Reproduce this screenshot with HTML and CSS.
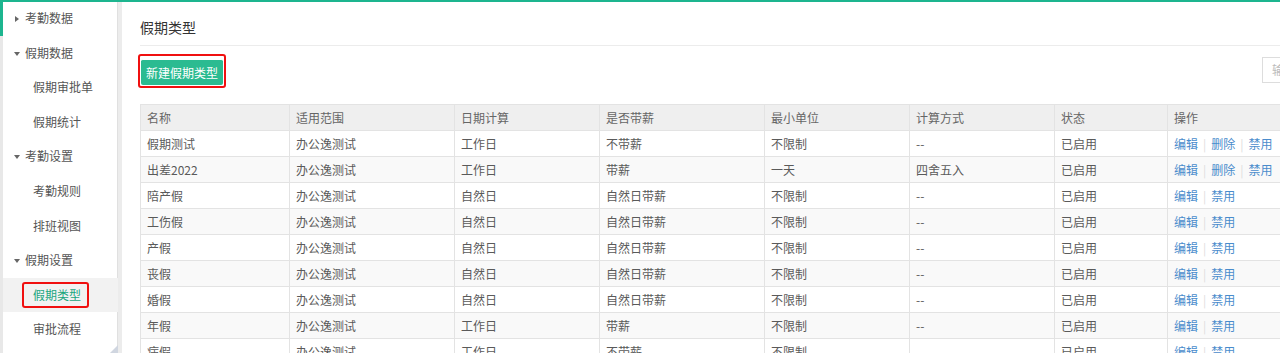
FILE: index.html
```html
<!DOCTYPE html>
<html lang="zh-CN">
<head>
<meta charset="utf-8">
<title>假期类型</title>
<link rel="stylesheet" href="styles.css">
</head>
<body>
<div class="app">
  <aside class="sidebar">
    <ul class="menu">
      <li class="item top first"><span class="caret right"></span>考勤数据</li>
      <li class="item top"><span class="caret down"></span>假期数据</li>
      <li class="item sub">假期审批单</li>
      <li class="item sub">假期统计</li>
      <li class="item top"><span class="caret down"></span>考勤设置</li>
      <li class="item sub">考勤规则</li>
      <li class="item sub">排班视图</li>
      <li class="item top"><span class="caret down"></span>假期设置</li>
      <li class="item sub active"><span class="mark">假期类型</span></li>
      <li class="item sub">审批流程</li>
    </ul>
    <span class="grip"></span>
  </aside>
  <main class="main">
    <h1 class="title">假期类型</h1>
    <div class="toolbar">
      <span class="btn-mark"><button class="btn">新建假期类型</button></span>
      <span class="search">输入</span>
    </div>
    <table class="grid">
      <colgroup>
        <col style="width:149px"><col style="width:165px"><col style="width:145px"><col style="width:165px"><col style="width:145px"><col style="width:145px"><col style="width:113px"><col style="width:160px">
      </colgroup>
      <thead>
        <tr><th>名称</th><th>适用范围</th><th>日期计算</th><th>是否带薪</th><th>最小单位</th><th>计算方式</th><th>状态</th><th>操作</th></tr>
      </thead>
      <tbody>
        <tr><td>假期测试</td><td>办公逸测试</td><td>工作日</td><td>不带薪</td><td>不限制</td><td>--</td><td>已启用</td><td class="ops"><a>编辑</a><i>|</i><a>删除</a><i>|</i><a>禁用</a></td></tr>
        <tr><td>出差2022</td><td>办公逸测试</td><td>工作日</td><td>带薪</td><td>一天</td><td>四舍五入</td><td>已启用</td><td class="ops"><a>编辑</a><i>|</i><a>删除</a><i>|</i><a>禁用</a></td></tr>
        <tr><td>陪产假</td><td>办公逸测试</td><td>自然日</td><td>自然日带薪</td><td>不限制</td><td>--</td><td>已启用</td><td class="ops"><a>编辑</a><i>|</i><a>禁用</a></td></tr>
        <tr><td>工伤假</td><td>办公逸测试</td><td>自然日</td><td>自然日带薪</td><td>不限制</td><td>--</td><td>已启用</td><td class="ops"><a>编辑</a><i>|</i><a>禁用</a></td></tr>
        <tr><td>产假</td><td>办公逸测试</td><td>自然日</td><td>自然日带薪</td><td>不限制</td><td>--</td><td>已启用</td><td class="ops"><a>编辑</a><i>|</i><a>禁用</a></td></tr>
        <tr><td>丧假</td><td>办公逸测试</td><td>自然日</td><td>自然日带薪</td><td>不限制</td><td>--</td><td>已启用</td><td class="ops"><a>编辑</a><i>|</i><a>禁用</a></td></tr>
        <tr><td>婚假</td><td>办公逸测试</td><td>自然日</td><td>自然日带薪</td><td>不限制</td><td>--</td><td>已启用</td><td class="ops"><a>编辑</a><i>|</i><a>禁用</a></td></tr>
        <tr><td>年假</td><td>办公逸测试</td><td>工作日</td><td>带薪</td><td>不限制</td><td>--</td><td>已启用</td><td class="ops"><a>编辑</a><i>|</i><a>禁用</a></td></tr>
        <tr><td>病假</td><td>办公逸测试</td><td>工作日</td><td>不带薪</td><td>不限制</td><td>--</td><td>已启用</td><td class="ops"><a>编辑</a><i>|</i><a>禁用</a></td></tr>
      </tbody>
    </table>
  </main>
</div>
</body>
</html>
```

FILE: styles.css
```css
* { box-sizing: border-box; }
html, body { margin: 0; padding: 0; height: 100%; overflow: hidden; background: #fff; }
body {
  font-family: "Noto Sans CJK SC", "Noto Sans", "Liberation Sans", sans-serif;
  font-size: 12px;
  color: #555;
  border-top: 2px solid #1db58f;
}
.app { display: flex; height: 100%; }

.sidebar {
  position: relative;
  width: 122px;
  flex: none;
  border-left: 3px solid #e8e8e8;
  border-right: 4px solid #ececec;
  background: #fff;
  box-shadow: inset -1px 0 0 #e0e0e0;
}
.menu { list-style: none; margin: -1px 0 0 0; padding: 0; }
.item {
  height: 34.6px;
  line-height: 34.6px;
  white-space: nowrap;
  color: #555;
}
.item.first { box-shadow: -3px 0 0 #1db58f; }
.item.top { padding-left: 11px; }
.item.sub { padding-left: 30px; }
.item.active { background: #f2f2f2; padding-left: 19px; color: #1aa67f; }
.mark {
  display: inline-block;
  line-height: 20px;
  padding: 1px 6px 1px 9px;
  border: 2px solid #f01010;
  border-radius: 3px;
}
.caret {
  display: inline-block;
  width: 0; height: 0;
  margin-right: 5px;
  vertical-align: 1px;
}
.caret.right { border-top: 3.5px solid transparent; border-bottom: 3.5px solid transparent; border-left: 4px solid #666; margin-left: 1px; margin-right: 6px; }
.caret.down { border-left: 3.5px solid transparent; border-right: 3.5px solid transparent; border-top: 4px solid #666; vertical-align: 2px; }
.grip {
  position: absolute;
  right: 0; bottom: 0;
  width: 0; height: 0;
  border-left: 8px solid transparent;
  border-bottom: 8px solid #d0d6e0;
}

.main {
  flex: 1;
  min-width: 0;
  padding: 0 0 0 18px;
  overflow: hidden;
}
.title {
  margin: 0;
  font-size: 14px;
  font-weight: normal;
  color: #333;
  line-height: 20px;
  padding: 15px 0 8px;
  border-bottom: 1px solid #ececec;
}
.toolbar {
  display: flex;
  justify-content: space-between;
  align-items: center;
  margin-top: 8px;
  height: 34px;
  margin-left: -2px;
}
.btn-mark {
  display: inline-block;
  border: 2px solid #f01010;
  border-radius: 3px;
  padding: 3px 1px 1px 1px;
}
.btn {
  display: block;
  border: 0;
  border-top: 1px solid #fff;
  background: #2bbb91;
  color: #fff;
  font-family: inherit;
  font-size: 12px;
  height: 26px;
  width: 82px;
  padding: 0;
  border-radius: 2px;
}
.search {
  width: 18px;
  height: 26px;
  border: 1px solid #ddd;
  border-right: 0;
  color: #bbb;
  padding-left: 9px;
  line-height: 24px;
  margin-top: -2px;
  overflow: hidden;
  white-space: nowrap;
}

.grid {
  margin-top: 16px;
  border-collapse: collapse;
  table-layout: fixed;
  width: 1187px;
}
.grid th, .grid td {
  height: 26px;
  padding: 0 6px;
  border: 1px solid #e3e3e3;
  text-align: left;
  font-weight: normal;
  white-space: nowrap;
  color: #5a5a5a;
}
.grid th { background: #efefef; color: #666; }
.grid tbody tr:nth-child(even) td { background: #f9f9f9; }
.ops a { color: #4a8ccc; }
.ops i { font-style: normal; color: #ddd; margin: 0 5px; }
```
